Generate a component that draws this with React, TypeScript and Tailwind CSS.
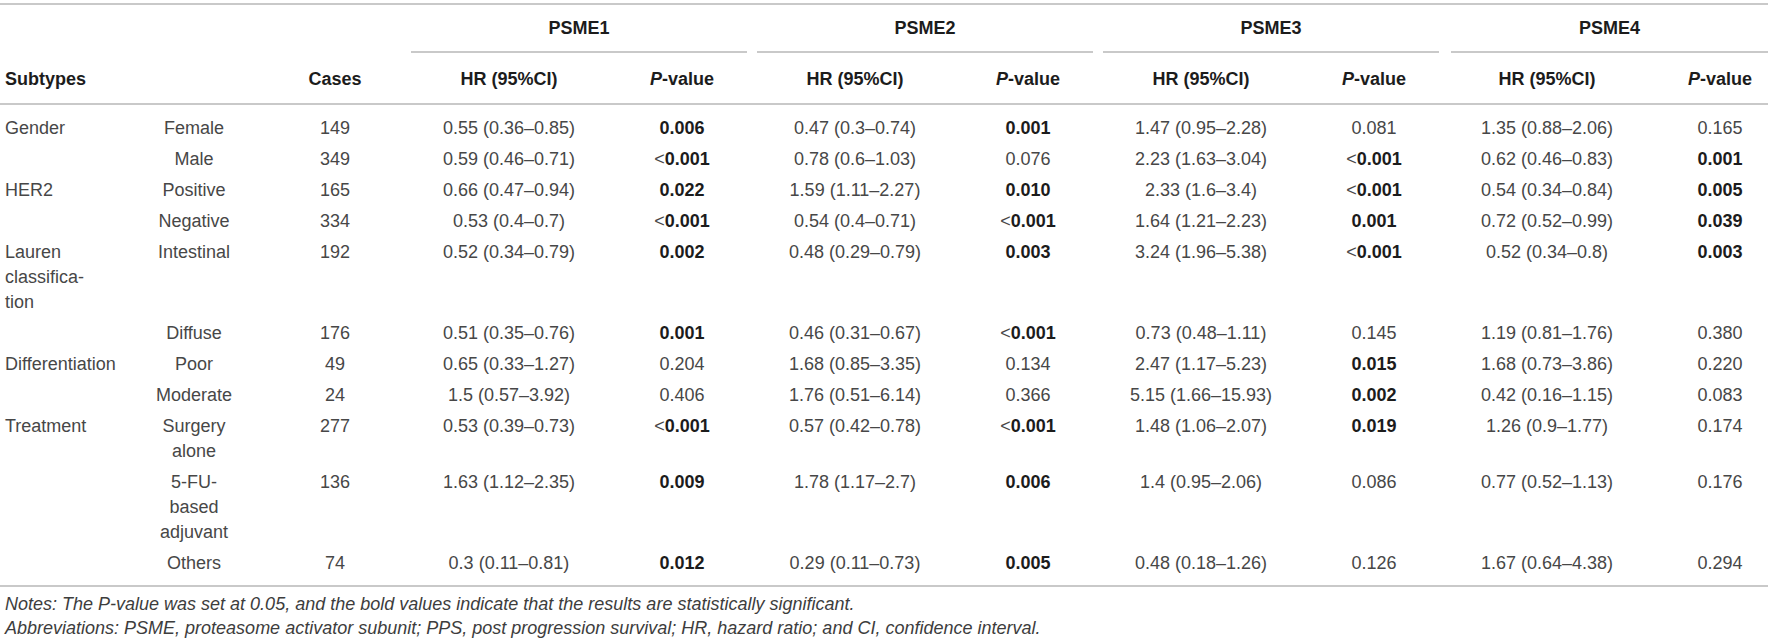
import React from 'react';

type Cell = [string, string, boolean];

interface Row {
  group?: string[];
  sub: string[];
  cases: number;
  vals: Cell[];
}

const rows: Row[] = [
  {
    group: ['Gender'],
    sub: ['Female'],
    cases: 149,
    vals: [
      ['0.55 (0.36–0.85)', '0.006', true],
      ['0.47 (0.3–0.74)', '0.001', true],
      ['1.47 (0.95–2.28)', '0.081', false],
      ['1.35 (0.88–2.06)', '0.165', false],
    ],
  },
  {
    sub: ['Male'],
    cases: 349,
    vals: [
      ['0.59 (0.46–0.71)', '<0.001', true],
      ['0.78 (0.6–1.03)', '0.076', false],
      ['2.23 (1.63–3.04)', '<0.001', true],
      ['0.62 (0.46–0.83)', '0.001', true],
    ],
  },
  {
    group: ['HER2'],
    sub: ['Positive'],
    cases: 165,
    vals: [
      ['0.66 (0.47–0.94)', '0.022', true],
      ['1.59 (1.11–2.27)', '0.010', true],
      ['2.33 (1.6–3.4)', '<0.001', true],
      ['0.54 (0.34–0.84)', '0.005', true],
    ],
  },
  {
    sub: ['Negative'],
    cases: 334,
    vals: [
      ['0.53 (0.4–0.7)', '<0.001', true],
      ['0.54 (0.4–0.71)', '<0.001', true],
      ['1.64 (1.21–2.23)', '0.001', true],
      ['0.72 (0.52–0.99)', '0.039', true],
    ],
  },
  {
    group: ['Lauren', 'classifica-', 'tion'],
    sub: ['Intestinal'],
    cases: 192,
    vals: [
      ['0.52 (0.34–0.79)', '0.002', true],
      ['0.48 (0.29–0.79)', '0.003', true],
      ['3.24 (1.96–5.38)', '<0.001', true],
      ['0.52 (0.34–0.8)', '0.003', true],
    ],
  },
  {
    sub: ['Diffuse'],
    cases: 176,
    vals: [
      ['0.51 (0.35–0.76)', '0.001', true],
      ['0.46 (0.31–0.67)', '<0.001', true],
      ['0.73 (0.48–1.11)', '0.145', false],
      ['1.19 (0.81–1.76)', '0.380', false],
    ],
  },
  {
    group: ['Differentiation'],
    sub: ['Poor'],
    cases: 49,
    vals: [
      ['0.65 (0.33–1.27)', '0.204', false],
      ['1.68 (0.85–3.35)', '0.134', false],
      ['2.47 (1.17–5.23)', '0.015', true],
      ['1.68 (0.73–3.86)', '0.220', false],
    ],
  },
  {
    sub: ['Moderate'],
    cases: 24,
    vals: [
      ['1.5 (0.57–3.92)', '0.406', false],
      ['1.76 (0.51–6.14)', '0.366', false],
      ['5.15 (1.66–15.93)', '0.002', true],
      ['0.42 (0.16–1.15)', '0.083', false],
    ],
  },
  {
    group: ['Treatment'],
    sub: ['Surgery', 'alone'],
    cases: 277,
    vals: [
      ['0.53 (0.39–0.73)', '<0.001', true],
      ['0.57 (0.42–0.78)', '<0.001', true],
      ['1.48 (1.06–2.07)', '0.019', true],
      ['1.26 (0.9–1.77)', '0.174', false],
    ],
  },
  {
    sub: ['5-FU-', 'based', 'adjuvant'],
    cases: 136,
    vals: [
      ['1.63 (1.12–2.35)', '0.009', true],
      ['1.78 (1.17–2.7)', '0.006', true],
      ['1.4 (0.95–2.06)', '0.086', false],
      ['0.77 (0.52–1.13)', '0.176', false],
    ],
  },
  {
    sub: ['Others'],
    cases: 74,
    vals: [
      ['0.3 (0.11–0.81)', '0.012', true],
      ['0.29 (0.11–0.73)', '0.005', true],
      ['0.48 (0.18–1.26)', '0.126', false],
      ['1.67 (0.64–4.38)', '0.294', false],
    ],
  },
];

const genes = ['PSME1', 'PSME2', 'PSME3', 'PSME4'];

function PValue({ v, bold }: { v: string; bold: boolean }) {
  if (!bold) return <span>{v}</span>;
  if (v.startsWith('<')) {
    return (
      <span>
        &lt;<span className="font-bold text-[#1c1c1c]">{v.slice(1)}</span>
      </span>
    );
  }
  return <span className="font-bold text-[#1c1c1c]">{v}</span>;
}

function Lines({ items }: { items: string[] }) {
  return (
    <>
      {items.map((t, i) => (
        <div key={i}>{t}</div>
      ))}
    </>
  );
}

export default function App() {
  return (
    <div
      className="w-[1772px] h-[643px] bg-white pt-[3px] text-[18px] leading-[25px] text-[#474747] overflow-hidden"
      style={{ fontFamily: '"Liberation Sans", Arial, sans-serif' }}
    >
      <table className="w-[1768px] table-fixed border-collapse">
        <colgroup>
          <col className="w-[124px]" />
          <col className="w-[140px]" />
          <col className="w-[142px]" />
          <col className="w-[206px]" />
          <col className="w-[140px]" />
          <col className="w-[206px]" />
          <col className="w-[140px]" />
          <col className="w-[206px]" />
          <col className="w-[140px]" />
          <col className="w-[206px]" />
          <col className="w-[118px]" />
        </colgroup>
        <thead className="text-[#1c1c1c]">
          <tr className="border-t-2 border-[#c9c9c9]">
            <th className="p-0" />
            <th className="p-0" />
            <th className="p-0" />
            {genes.map((g, i) => (
              <th
                key={g}
                colSpan={2}
                className={i === 3 ? 'p-0 pl-[7px]' : 'p-0 px-[5px]'}
              >
                <div className="h-[48px] flex items-center justify-center border-b-2 border-[#c9c9c9] font-bold">
                  {g}
                </div>
              </th>
            ))}
          </tr>
          <tr className="border-b-2 border-[#c9c9c9] font-bold">
            <th className="text-left px-[5px] pt-[14px] pb-[11px]">Subtypes</th>
            <th />
            <th className="text-center pt-[14px] pb-[11px]">Cases</th>
            {genes.map((g, i) => (
              <React.Fragment key={g}>
                <th className="text-center pt-[14px] pb-[11px]">HR (95%CI)</th>
                <th
                  className={
                    i === 3
                      ? 'text-center pl-[22px] pt-[14px] pb-[11px]'
                      : 'text-center pt-[14px] pb-[11px]'
                  }
                >
                  <i>P</i>-value
                </th>
              </React.Fragment>
            ))}
          </tr>
        </thead>
        <tbody className="border-b-2 border-[#c9c9c9]">
          {rows.map((r, idx) => {
            const pad =
              idx === 0
                ? 'pt-[11px] pb-[3px]'
                : idx === rows.length - 1
                  ? 'pt-[3px] pb-[9px]'
                  : 'py-[3px]';
            return (
              <tr key={idx} className="align-top">
                <td className={`text-left px-[5px] ${pad}`}>
                  {r.group ? <Lines items={r.group} /> : null}
                </td>
                <td className={`text-center ${pad}`}>
                  <Lines items={r.sub} />
                </td>
                <td className={`text-center ${pad}`}>{r.cases}</td>
                {r.vals.map((v, i) => (
                  <React.Fragment key={i}>
                    <td className={`text-center whitespace-nowrap ${pad}`}>{v[0]}</td>
                    <td className={`text-center ${i === 3 ? 'pl-[22px]' : ''} ${pad}`}>
                      <PValue v={v[1]} bold={v[2]} />
                    </td>
                  </React.Fragment>
                ))}
              </tr>
            );
          })}
        </tbody>
      </table>
      <div className="pt-[5px] px-[5px] italic leading-[24px] text-[#3d3d3d]">
        <div>
          Notes: The P-value was set at 0.05, and the bold values indicate that the results are
          statistically significant.
        </div>
        <div>
          Abbreviations: PSME, proteasome activator subunit; PPS, post progression survival; HR,
          hazard ratio; and CI, confidence interval.
        </div>
      </div>
    </div>
  );
}
